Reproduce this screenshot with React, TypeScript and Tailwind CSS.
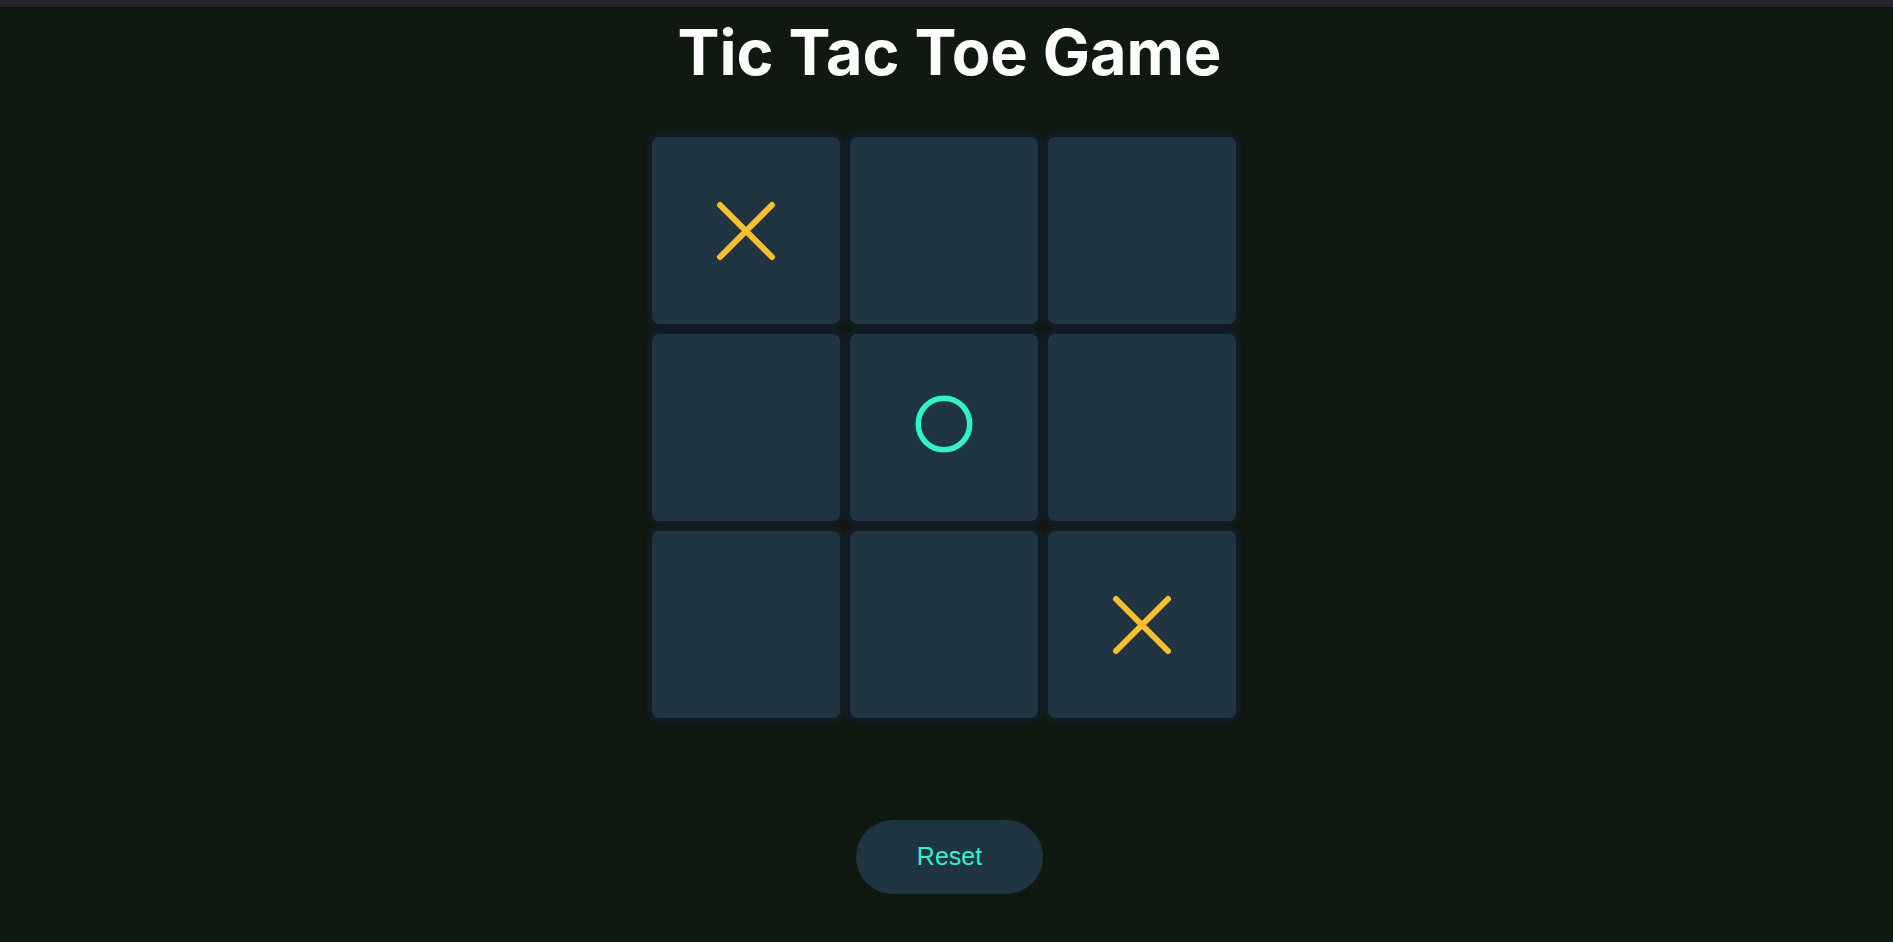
import { useState } from 'react';

type Mark = 'X' | 'O' | null;

const START: Mark[] = ['X', null, null, null, 'O', null, null, null, 'X'];

function XMark() {
  return (
    <svg width="64" height="64" viewBox="0 0 64 64" fill="none">
      <path
        d="M6 6L58 58M58 6L6 58"
        stroke="#fcc02a"
        strokeWidth="6"
        strokeLinecap="round"
      />
    </svg>
  );
}

function OMark() {
  return (
    <svg width="60" height="60" viewBox="0 0 60 60" fill="none" className="-mt-[8px]">
      <circle cx="30" cy="30" r="25.75" stroke="#2ef4c9" strokeWidth="5.5" />
    </svg>
  );
}

export default function App() {
  const [board, setBoard] = useState<Mark[]>(START);
  const [turn, setTurn] = useState<'X' | 'O'>('O');

  const play = (i: number) => {
    if (board[i]) return;
    const next = [...board];
    next[i] = turn;
    setBoard(next);
    setTurn(turn === 'X' ? 'O' : 'X');
  };

  const reset = () => {
    setBoard(Array(9).fill(null));
    setTurn('X');
  };

  return (
    <div className="min-h-screen bg-[#0f190f] flex flex-col font-['Inter',sans-serif]">
      <div className="h-[7px] bg-[#25252b] shrink-0" />

      <h1 className="mt-[14px] pl-[6px] text-center text-[63px] leading-none font-bold text-white">
        Tic Tac Toe Game
      </h1>

      <div className="mt-[48px] flex justify-center pr-[5px]">
        <div className="grid grid-cols-3 w-[594px]">
          {board.map((cell, i) => (
            <button
              key={i}
              onClick={() => play(i)}
              className="h-[197px] rounded-[12px] border-[5px] border-[#111b21] bg-[#1f3541] flex items-center justify-center"
            >
              {cell === 'X' && <XMark />}
              {cell === 'O' && <OMark />}
            </button>
          ))}
        </div>
      </div>

      <div className="mt-[97px] flex justify-center pl-[6px]">
        <button
          onClick={reset}
          className="w-[187px] h-[74px] rounded-full bg-[#1f3541] text-[25px] text-[#2ef4c9] font-['Liberation_Sans',Arial,sans-serif]"
        >
          Reset
        </button>
      </div>
    </div>
  );
}
